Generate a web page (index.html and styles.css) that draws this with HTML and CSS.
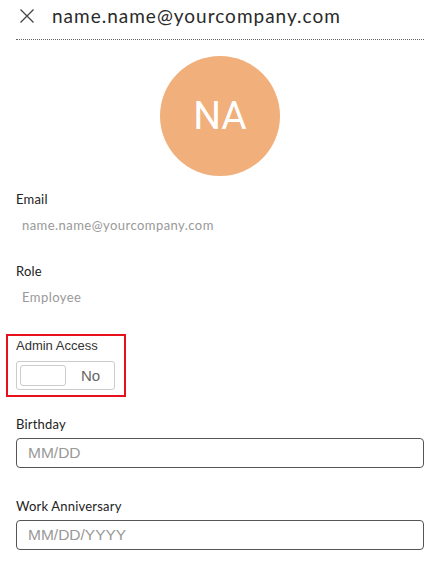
FILE: index.html
```html
<!DOCTYPE html>
<html>

<head>
    <meta charset="UTF-8">
    <title>Employee profile</title>
    <link rel="stylesheet" href="styles.css">
</head>

<body>
    <div class="profile-panel">
        <div class="panel-header">
            <span class="close-btn">
                <svg width="16" height="16" viewBox="0 0 16 16">
                    <path d="M1.5 1.5 L14.5 14.5 M14.5 1.5 L1.5 14.5" stroke="#444" stroke-width="1.3" fill="none" />
                </svg>
            </span>
            <span class="panel-title">name.name@yourcompany.com</span>
        </div>

        <div class="avatar-row">
            <div class="avatar">NA</div>
        </div>

        <div class="field first-field">
            <div class="field-label">Email</div>
            <div class="field-value">name.name@yourcompany.com</div>
        </div>

        <div class="field">
            <div class="field-label">Role</div>
            <div class="field-value">Employee</div>
        </div>

        <div class="field admin-field">
            <div class="admin-label">Admin Access</div>
            <div class="toggle-box">
                <span class="toggle-knob"></span>
                <span class="toggle-text">No</span>
            </div>
        </div>

        <div class="field date-field">
            <div class="field-label">Birthday</div>
            <input class="date-input" type="text" placeholder="MM/DD">
        </div>

        <div class="field date-field">
            <div class="field-label">Work Anniversary</div>
            <input class="date-input" type="text" placeholder="MM/DD/YYYY">
        </div>
    </div>
</body>

</html>
```

FILE: styles.css
```css
* {
    box-sizing: border-box;
}

body {
    margin: 0;
    background: #fff;
    font-family: "Lato", "Liberation Sans", sans-serif;
    color: #222;
}

.profile-panel {
    padding: 0 18px 0 16px;
}

.panel-header {
    display: flex;
    align-items: center;
    height: 40px;
    padding-bottom: 8px;
    border-bottom: 1px dotted #666;
}

.close-btn {
    display: flex;
    width: 36px;
    padding-left: 3px;
}

.panel-title {
    font-size: 19px;
    color: #2a2a2a;
    letter-spacing: 1px;
}

.avatar-row {
    display: flex;
    justify-content: center;
    padding-top: 16px;
}

.avatar {
    width: 120px;
    height: 120px;
    border-radius: 50%;
    background: #f0af7b;
    color: #fff;
    font-family: "Roboto", "Liberation Sans", sans-serif;
    font-size: 39px;
    display: flex;
    align-items: center;
    justify-content: center;
}

.field {
    margin-top: 28px;
}

.first-field {
    margin-top: 14px;
}

.field-label {
    font-size: 13px;
    color: #222;
    line-height: 18px;
    letter-spacing: 0.2px;
}

.field-value {
    font-size: 13px;
    color: #999;
    padding: 8px 0 0 6px;
    line-height: 18px;
    letter-spacing: 0.45px;
}

.admin-field {
    margin-left: -10px;
    width: 120px;
    padding: 1px 8px 5px 8px;
    border: 2px solid #e8101b;
}

.admin-label {
    font-family: "Liberation Sans", Arial, sans-serif;
    font-size: 13px;
    color: #333;
    line-height: 18px;
}

.toggle-box {
    display: flex;
    align-items: center;
    margin-top: 6px;
    width: 99px;
    height: 29px;
    padding: 3px;
    border: 1px solid #ccc;
    border-radius: 3px;
}

.toggle-knob {
    width: 46px;
    height: 21px;
    border: 1px solid #ccc;
    border-radius: 3px;
}

.toggle-text {
    flex: 1;
    text-align: center;
    padding-left: 4px;
    font-family: "Liberation Sans", Arial, sans-serif;
    font-size: 15px;
    color: #666;
}

.date-field {
    margin-top: 18px;
}

.date-field + .date-field {
    margin-top: 29px;
}

.date-input {
    display: block;
    width: 100%;
    height: 30px;
    margin-top: 5px;
    padding: 0 11px;
    border: 1px solid #555;
    border-radius: 4px;
    font-family: "Liberation Sans", Arial, sans-serif;
    font-size: 15.5px;
    color: #333;
}

.date-input::placeholder {
    color: #999;
}
```
